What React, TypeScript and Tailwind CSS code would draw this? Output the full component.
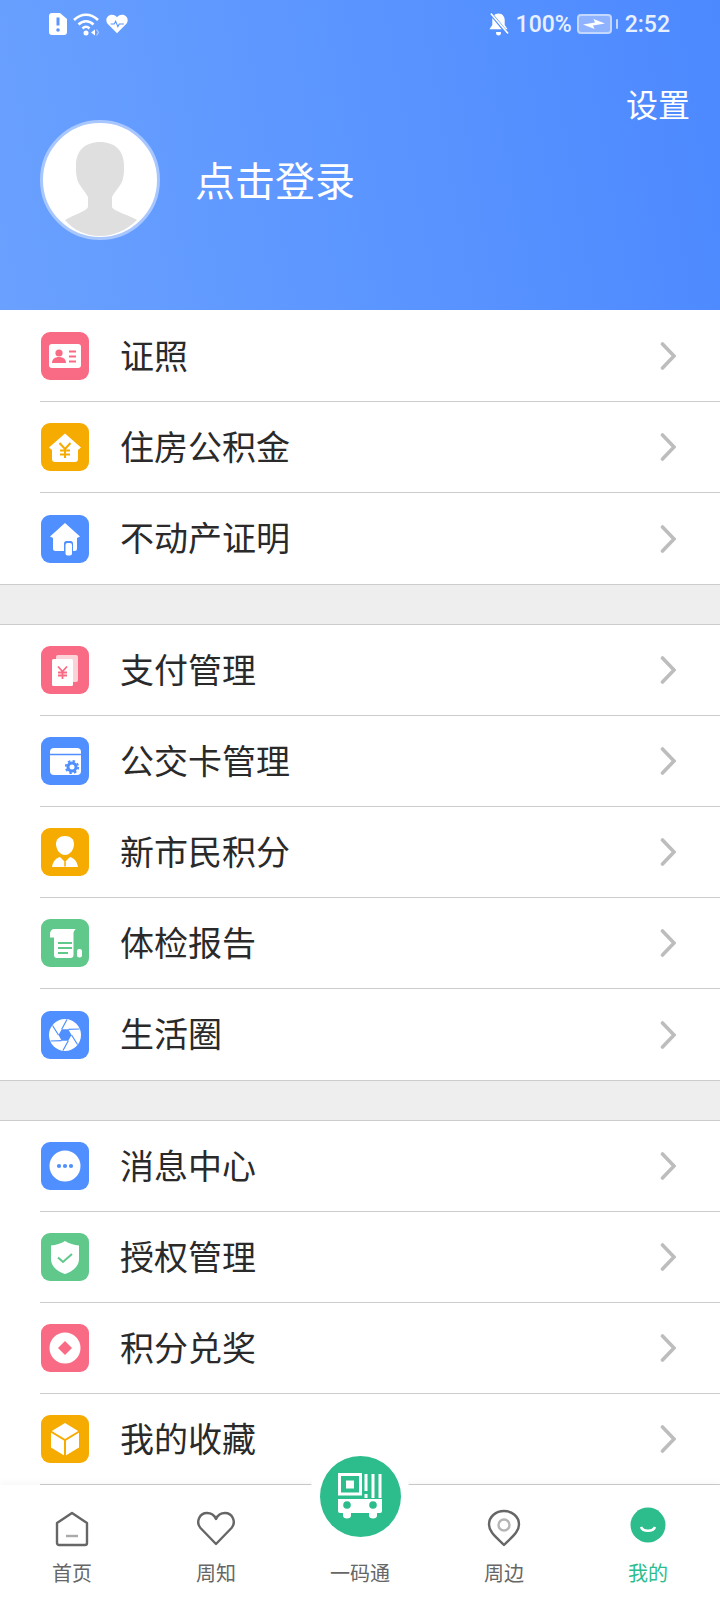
import type { ReactNode } from "react";

const CJK = "font-['Noto_Sans_CJK_SC','Noto_Sans',sans-serif]";

// --- menu icons, all drawn on a 48x48 box ---
const IdCardIcon = () => (
  <svg viewBox="0 0 48 48" className="h-12 w-12">
    <rect x="8" y="12" width="32" height="24" rx="3" fill="#fff" />
    <circle cx="18" cy="21" r="3.6" fill="#f96b84" />
    <path d="M11 31c0-4 3-6 7-6s7 2 7 6z" fill="#f96b84" />
    <path d="M28 19.500h7M28 24.500h7M28 29.500h7" stroke="#f96b84" strokeWidth="1.800" />
  </svg>
);

const FundIcon = () => (
  <svg viewBox="0 0 48 48" className="h-12 w-12">
    <path d="M24 10.500 40 24.500 37 27v9a3 3 0 0 1-3 3H14a3 3 0 0 1-3-3v-9l-3-2.500z" fill="#fff" />
    <path d="M18.500 20 24 26l5.500-6M24 26v9M19 27.500h10M19 31.500h10" stroke="#f5ab00" strokeWidth="2" fill="none" />
  </svg>
);

const EstateIcon = () => (
  <svg viewBox="0 0 48 48" className="h-12 w-12">
    <path d="M24 8 39 21.500 36 23v10.500a2.500 2.500 0 0 1-2.500 2.500h-19a2.500 2.500 0 0 1-2.500-2.500V23l-3-1.500z" fill="#fff" />
    <rect x="23" y="26" width="9" height="16" rx="2.500" fill="#4f8fff" />
    <rect x="24.500" y="28" width="6.500" height="12.500" rx="2" fill="#fff" />
  </svg>
);

const PayIcon = () => (
  <svg viewBox="0 0 48 48" className="h-12 w-12">
    <rect x="15" y="9" width="22" height="27" rx="2" fill="#fff" fillOpacity="0.7" />
    <rect x="11" y="13" width="21" height="27" rx="1.500" fill="#fff" />
    <path d="M17 20.500l4.500 5 4.500-5M21.500 25.500v7.500M17 26.500h9M17 29.500h9" stroke="#f96b84" strokeWidth="1.800" fill="none" />
  </svg>
);

const BusCardIcon = () => (
  <svg viewBox="0 0 48 48" className="h-12 w-12">
    <rect x="9" y="11" width="31" height="27" rx="4" fill="#fff" />
    <path d="M9 17.500h31" stroke="#4f8fff" strokeWidth="1.500" />
    <circle cx="31" cy="30" r="4" fill="none" stroke="#4f8fff" strokeWidth="3" />
    <circle cx="31" cy="30" r="6.200" fill="none" stroke="#4f8fff" strokeWidth="1.800" strokeDasharray="2.500 2.350" />
  </svg>
);

const CitizenIcon = () => (
  <svg viewBox="0 0 48 48" className="h-12 w-12">
    <path d="M24 8c5.500 0 9 3 9 8 0 5-3.500 11-9 11s-9-6-9-11c0-5 3.500-8 9-8z" fill="#fff" />
    <path d="M19 29l5 5 5-5c4 1 7 4 8 10H11c1-6 4-9 8-10z" fill="#fff" />
    <path d="M24 33.500v5" stroke="#f5ab00" strokeWidth="1.500" />
  </svg>
);

const ReportIcon = () => (
  <svg viewBox="0 0 48 48" className="h-12 w-12">
    <path d="M9 15c0-3 1.500-5 4.500-5H35c-1.500 1-2.500 2.500-2.500 4.500V36a3 3 0 0 1-3 3H16a3 3 0 0 1-3-3V18.500H9z" fill="#fff" />
    <path d="M17 24h14M17 29h14M17 34h10" stroke="#5fc88a" strokeWidth="1.800" />
    <rect x="36" y="30" width="5" height="8.500" rx="2.200" fill="#fff" />
  </svg>
);

const ShutterIcon = () => (
  <svg viewBox="0 0 48 48" className="h-12 w-12">
    <circle cx="24" cy="24" r="16" fill="#fff" />
    <path d="M17.500 24 20.700 18.300h6.600L30.500 24l-3.200 5.700h-6.600z" fill="#4f8fff" />
    <path
      d="M20.700 18.300 26 8.500M27.300 18.300 38.500 18M30.500 24l6 9.500M27.300 29.700 22 39.500M20.700 29.700 9.500 30M17.500 24l-6-9.500"
      stroke="#4f8fff"
      strokeWidth="1.200"
      fill="none"
    />
  </svg>
);

const MessageIcon = () => (
  <svg viewBox="0 0 48 48" className="h-12 w-12">
    <circle cx="24" cy="24" r="15.500" fill="#fff" />
    <circle cx="18" cy="24" r="2.100" fill="#4f8fff" />
    <circle cx="24" cy="24" r="2.100" fill="#4f8fff" />
    <circle cx="30" cy="24" r="2.100" fill="#4f8fff" />
  </svg>
);

const ShieldIcon = () => (
  <svg viewBox="0 0 48 48" className="h-12 w-12">
    <path d="M24 8c4 2.500 9 4 14 4.500V26c0 7-6 12.500-14 15-8-2.500-14-8-14-15V12.500C15 12 20 10.500 24 8z" fill="#fff" />
    <path d="M17 24.500l5 4.500 9-8" stroke="#5fc88a" strokeWidth="2" fill="none" />
  </svg>
);

const PointsIcon = () => (
  <svg viewBox="0 0 48 48" className="h-12 w-12">
    <circle cx="24" cy="24" r="15.500" fill="#fff" />
    <path d="M24 17l7 7-7 7-7-7z" fill="#f96b84" />
  </svg>
);

const BoxIcon = () => (
  <svg viewBox="0 0 48 48" className="h-12 w-12">
    <path d="M24 8l14 8.500v16L24 41 10 32.500v-16z" fill="#fff" />
    <path d="M9 16l15 9 15-9M24 25v17" stroke="#f5ab00" strokeWidth="2" fill="none" />
  </svg>
);

interface MenuItem {
  label: string;
  color: string;
  icon: ReactNode;
}

const sections: MenuItem[][] = [
  [
    { label: "证照", color: "bg-[#f96b84]", icon: <IdCardIcon /> },
    { label: "住房公积金", color: "bg-[#f5ab00]", icon: <FundIcon /> },
    { label: "不动产证明", color: "bg-[#4f8fff]", icon: <EstateIcon /> },
  ],
  [
    { label: "支付管理", color: "bg-[#f96b84]", icon: <PayIcon /> },
    { label: "公交卡管理", color: "bg-[#4f8fff]", icon: <BusCardIcon /> },
    { label: "新市民积分", color: "bg-[#f5ab00]", icon: <CitizenIcon /> },
    { label: "体检报告", color: "bg-[#5fc88a]", icon: <ReportIcon /> },
    { label: "生活圈", color: "bg-[#4f8fff]", icon: <ShutterIcon /> },
  ],
  [
    { label: "消息中心", color: "bg-[#4f8fff]", icon: <MessageIcon /> },
    { label: "授权管理", color: "bg-[#5fc88a]", icon: <ShieldIcon /> },
    { label: "积分兑奖", color: "bg-[#f96b84]", icon: <PointsIcon /> },
    { label: "我的收藏", color: "bg-[#f5ab00]", icon: <BoxIcon /> },
  ],
];

const StatusBar = () => (
  <div className="flex h-12 items-center justify-between pl-[49px] pr-[50px] text-white">
    <div className="flex items-center gap-[6px]">
      <svg viewBox="0 0 18 22" className="h-[22px] w-[18px]">
        <path d="M3 0h8l7 6v13a3 3 0 0 1-3 3H3a3 3 0 0 1-3-3V3a3 3 0 0 1 3-3z" fill="#fff" />
        <path d="M9 4.500v8" stroke="#5b96ff" strokeWidth="3" />
        <circle cx="9" cy="17" r="1.800" fill="#5b96ff" />
      </svg>
      <svg viewBox="0 0 27 24" className="h-6 w-[27px]">
        <path d="M1 8c7-7 17-7 24 0" stroke="#fff" strokeWidth="2.500" fill="none" />
        <path d="M5.500 12.500c4.500-4.500 10.500-4.500 15 0" stroke="#fff" strokeWidth="2.500" fill="none" />
        <path d="M9.500 16.500c2.500-2.500 4.500-2.500 7 0" stroke="#fff" strokeWidth="2.500" fill="none" />
        <circle cx="13" cy="21" r="2.500" fill="#fff" />
        <path d="M18 20.500l4-3v6z" fill="#fff" />
        <path d="M23.500 17.500l2 3-2 3" stroke="#fff" strokeOpacity="0.5" strokeWidth="1.200" fill="none" />
      </svg>
      <svg viewBox="0 0 24 20" className="h-5 w-[22px]">
        <path d="M12 20 2 10C-1.500 6 1 0 6.500 0 9 0 11 1.200 12 3c1-1.800 3-3 5.500-3C23 0 25.500 6 22 10z" fill="#fff" />
        <path d="M5 10h4l1.500-3 2.500 6 1.500-3h5" stroke="#5b96ff" strokeWidth="1.200" fill="none" />
      </svg>
    </div>
    <div className="flex items-center font-['Roboto',sans-serif] text-[23px] font-medium leading-none text-[#e8f0ff]">
      <svg viewBox="0 0 22 24" className="h-6 w-[21px]">
        <path d="M11 1c4 0 6.500 3 6.500 7v5l3 4.500H1.500l3-4.500V8c0-4 2.500-7 6.500-7z" fill="#fff" />
        <path d="M8.500 20.500h5v1.500a2.500 2 0 0 1-5 0z" fill="#fff" />
        <path d="M2 0l19 23" stroke="#4f8dff" strokeWidth="3.500" />
        <path d="M3 1l18 21" stroke="#fff" strokeWidth="1.800" />
      </svg>
      <span className="ml-[7px]">100%</span>
      <div className="ml-[5px] flex h-[20px] w-[35px] items-center justify-center rounded-[4px] border-2 border-[#c4d8ff] bg-[#8fb3ff]">
        <svg viewBox="0 0 24 10" className="h-[10px] w-6">
          <path d="M1 5.500 13 3.500 11.500 0l11.500 4.500L11 6.500 12.500 10z" fill="#fff" />
        </svg>
      </div>
      <div className="ml-[4px] h-[10px] w-[2px] rounded-sm bg-[#c4d8ff]" />
      <span className="ml-[7px]">2:52</span>
    </div>
  </div>
);

const ProfileHeader = () => (
  <div className={`h-[310px] shrink-0 bg-[linear-gradient(80deg,#6aa1ff,#4c89ff)] ${CJK}`}>
    <StatusBar />
    <div className="flex h-[72px] justify-end pr-[30px] pt-[35px] text-[32px] leading-[40px] text-white">
      设置
    </div>
    <div className="flex items-center pl-10">
      <div className="h-[120px] w-[120px] overflow-hidden rounded-full border-[3px] border-[#a9c7ff] bg-white">
        <svg viewBox="0 0 114 114" className="h-full w-full">
          <path
            d="M57 19C72 19 81 28 81 42C81 48 81 52 80 55C80 60 72 68 69 74V84C70 88 86 92 94 97C84 107 71 113 57 113C43 113 30 107 22 97C30 92 44 88 45 84V74C42 68 34 60 34 55C33 52 33 48 33 42C33 28 42 19 57 19z"
            fill="#dfdfdf"
          />
        </svg>
      </div>
      <span className="mb-[2px] ml-[35px] text-[40px] leading-[56px] text-white">点击登录</span>
    </div>
  </div>
);

const MenuRow = ({ item, last }: { item: MenuItem; last: boolean }) => (
  <div className="bg-white pl-10">
    <div
      className={`flex h-[91px] items-center pr-[44px] ${
        last ? "" : "border-b border-[#cccccc]"
      }`}
    >
      <div className={`ml-[1px] h-12 w-12 shrink-0 rounded-[9px] ${item.color}`}>{item.icon}</div>
      <span className="mb-[3px] ml-[31px] flex-1 text-[34px] leading-[48px] text-[#2a2a2a]">{item.label}</span>
      <svg viewBox="0 0 16 30" className="h-[30px] w-4" fill="none">
        <path d="M2.500 3 14 15 2.500 27" stroke="#bdbdbd" strokeWidth="3.600" strokeLinecap="round" />
      </svg>
    </div>
  </div>
);

const HomeTabIcon = () => (
  <svg viewBox="0 0 34 36" className="h-9 w-[34px]" fill="none">
    <path d="M17 2 32 12v20a2 2 0 0 1-2 2H4a2 2 0 0 1-2-2V12z" stroke="#666" strokeWidth="2.400" strokeLinejoin="round" />
    <path d="M11 25h12" stroke="#aaa" strokeWidth="2.400" />
  </svg>
);

const HeartTabIcon = () => (
  <svg viewBox="0 0 40 36" className="h-9 w-10" fill="none">
    <path d="M20 33 4.500 17C-.5 11 3.500 2 11 2c4 0 7.500 2.500 9 6 1.500-3.500 5-6 9-6 7.500 0 11.500 9 6.500 15z" stroke="#666" strokeWidth="2.400" strokeLinejoin="round" />
  </svg>
);

const PinTabIcon = () => (
  <svg viewBox="0 0 34 38" className="h-[38px] w-[34px]" fill="none">
    <path d="M17 36C9 28 2 23 2 15.500 2 7.500 9 2 17 2s15 5.500 15 13.500C32 23 25 28 17 36z" stroke="#666" strokeWidth="2.400" strokeLinejoin="round" />
    <circle cx="17" cy="16" r="5.500" stroke="#b5b5b5" strokeWidth="2.400" />
  </svg>
);

const SmileTabIcon = () => (
  <svg viewBox="0 0 36 36" className="mb-[4px] h-9 w-9">
    <circle cx="18" cy="18" r="17.500" fill="#2dbd8d" />
    <path d="M11 20c2 5 12 5 14 0" stroke="#fff" strokeWidth="2.600" fill="none" />
  </svg>
);

const BusQrIcon = () => (
  <svg viewBox="0 0 44 46" className="h-[46px] w-11">
    <path d="M1.500 1.500h21v19.500h-21z" fill="none" stroke="#fff" strokeWidth="3" />
    <rect x="8" y="7.500" width="8" height="8" fill="#fff" />
    <path d="M28 1v17M35 1v24M42 1v24M28 21v4" stroke="#fff" strokeWidth="3" />
    <path d="M0 26h44v12a2 2 0 0 1-2 2H2a2 2 0 0 1-2-2z" fill="#fff" />
    <circle cx="9" cy="32" r="3.800" fill="#2dbd8d" />
    <circle cx="35" cy="32" r="3.800" fill="#2dbd8d" />
    <path d="M5 40h8v2.500a4 3 0 0 1-8 0zM31 40h8v2.500a4 3 0 0 1-8 0z" fill="#fff" />
  </svg>
);

const tabs = [
  { label: "首页", icon: <HomeTabIcon /> },
  { label: "周知", icon: <HeartTabIcon /> },
  { label: "一码通", icon: null },
  { label: "周边", icon: <PinTabIcon /> },
  { label: "我的", icon: <SmileTabIcon />, active: true },
];

const TabBar = () => (
  <div className="relative z-10 grid h-[115px] shrink-0 grid-cols-5 bg-white shadow-[0_-3px_6px_rgba(0,0,0,0.03)]">
    {/* white halo + green button over the top edge of the bar */}
    <div className="absolute left-[310px] top-[-39px] flex h-[100px] w-[100px] items-center justify-center rounded-full bg-white">
      <div className="flex h-[81px] w-[81px] items-center justify-center rounded-full bg-[#2dbd8d]">
        <BusQrIcon />
      </div>
    </div>
    {tabs.map((tab) => (
      <div key={tab.label} className="flex flex-col items-center">
        <div className="flex h-[62px] items-end justify-center">{tab.icon}</div>
        <span className={`mt-[12px] text-[20px] leading-[28px] ${tab.active ? "text-[#2dbd8d]" : "text-[#666666]"}`}>
          {tab.label}
        </span>
      </div>
    ))}
  </div>
);

export default function App() {
  return (
    <div className={`flex h-[1600px] w-[720px] flex-col overflow-hidden bg-white ${CJK}`}>
      <ProfileHeader />
      <div className="flex-1 overflow-hidden pt-[1px]">
        {sections.map((rows, i) => (
          <div key={i}>
            {i > 0 && <div className="h-[41px] border-y border-[#cccccc] bg-[#eeeeee]" />}
            {rows.map((item, j) => (
              <MenuRow key={item.label} item={item} last={i < sections.length - 1 && j === rows.length - 1} />
            ))}
          </div>
        ))}
      </div>
      <TabBar />
    </div>
  );
}
